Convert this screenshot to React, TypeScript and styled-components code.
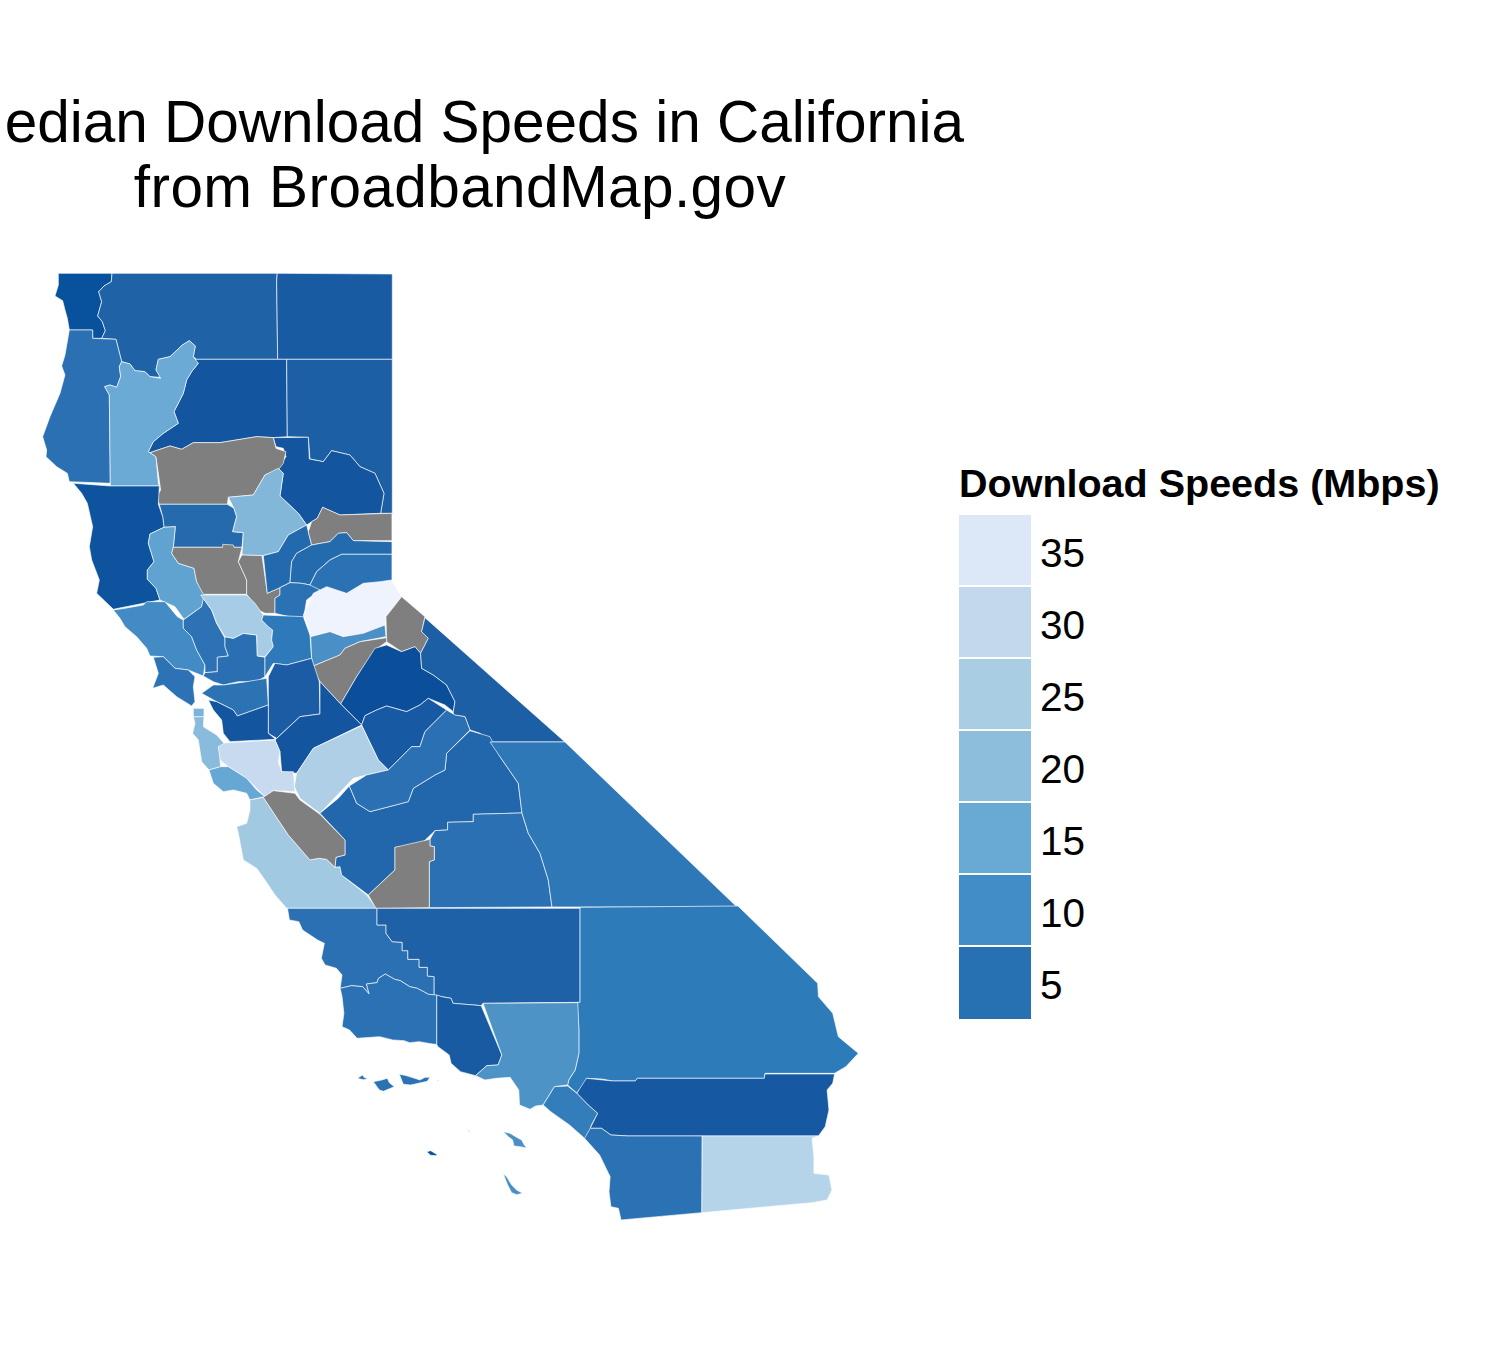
import styled, { createGlobalStyle } from 'styled-components';

const GlobalStyle = createGlobalStyle`
  html, body {
    margin: 0;
    padding: 0;
    background: #fff;
  }
  body {
    width: 1500px;
    height: 1350px;
    overflow: hidden;
    font-family: "Liberation Sans", Arial, sans-serif;
    color: #000;
  }
`;

interface County {
  name: string;
  fill: string;
  points: string;
}

interface Sheet {
  transform: string;
  counties: County[];
}

const GRAY = '#7f7f7f';

// traced in crops of the map, each sheet has its own origin and scale
const north: County[] = [
  { name: 'del-norte', fill: '#08519c', points: '85,40 246,40 244,65 222,78 206,95 215,125 203,168 217,185 226,212 215,235 188,235 188,210 118,210 112,175 105,150 98,122 75,108 85,75' },
  { name: 'siskiyou', fill: '#1f62a6', points: '246,40 742,40 740,60 743,298 500,298 490,290 496,258 478,242 456,256 420,290 385,298 378,330 392,352 360,350 345,335 315,332 300,312 275,305 258,238 215,235 226,212 217,185 203,168 215,125 206,95 222,78 244,65' },
  { name: 'modoc', fill: '#195ba3', points: '742,40 1087,42 1087,298 743,298 740,60' },
  { name: 'humboldt', fill: '#2a70b2', points: '118,210 188,210 188,235 258,238 275,305 268,320 272,350 260,382 240,375 224,380 238,405 241,670 118,665 112,640 80,620 48,590 50,570 38,530 60,470 90,400 105,345 95,318 105,285' },
  { name: 'shasta', fill: '#14559f', points: '490,298 743,298 770,298 772,530 730,533 680,530 570,548 490,548 455,568 420,558 360,578 355,575 370,545 400,520 445,490 432,455 460,400 470,360 485,335 505,310' },
  { name: 'trinity', fill: '#6aaad5', points: '275,305 300,312 315,332 345,335 360,350 392,355 378,330 385,298 420,290 456,256 478,242 496,258 490,290 505,310 485,335 470,360 460,400 432,455 445,490 400,520 370,545 355,575 378,590 385,670 388,678 241,678 238,405 224,380 240,375 260,382 272,350 268,320' },
  { name: 'lassen', fill: '#1d5fa5', points: '770,298 1087,298 1087,760 1052,760 1062,700 1035,640 990,620 960,585 905,572 880,605 840,597 835,532 772,530' },
  { name: 'plumas', fill: '#14559f', points: '730,533 835,532 838,597 880,605 905,572 960,585 990,620 1035,640 1062,700 1052,760 930,765 878,742 862,775 830,795 805,760 750,708 760,640 745,625 768,590 760,565 738,560' },
  { name: 'tehama', fill: GRAY, points: '360,578 420,558 455,568 490,548 570,548 680,530 730,533 738,565 768,575 760,610 745,630 705,645 670,705 595,712 592,733 388,733 380,710 392,690 378,590' },
  { name: 'glenn', fill: '#246aad', points: '388,733 592,733 612,745 620,770 608,815 640,818 636,862 430,862 436,800 402,802 398,770' },
  { name: 'butte', fill: '#82b7da', points: '595,712 670,705 705,645 745,625 760,640 750,708 805,760 830,795 775,825 745,875 700,887 636,885 640,818 608,815 620,770 612,745' },
  { name: 'mendocino', fill: '#0e539e', points: '130,670 241,678 388,678 385,733 398,770 402,802 360,822 355,850 372,905 352,930 352,958 378,985 390,1020 250,1048 200,1000 208,960 185,900 178,860 188,800 172,730 155,700' },
  { name: 'lake', fill: '#60a3d0', points: '402,802 436,800 430,862 425,880 445,910 492,925 500,965 525,1005 515,1040 462,1078 435,1040 390,1020 378,985 352,958 352,930 372,905 355,850 360,822' },
  { name: 'colusa', fill: GRAY, points: '430,862 578,862 578,853 610,855 612,862 636,862 625,905 650,960 650,1003 520,1003 500,965 492,925 445,910 425,880' },
  { name: 'sutter', fill: GRAY, points: '625,905 636,885 696,887 712,1000 750,983 750,1005 735,1015 735,1060 705,1060 685,1050 650,1003 650,960' },
  { name: 'yuba', fill: '#2369ad', points: '700,887 745,875 775,825 830,795 845,855 800,880 785,905 780,968 750,983 712,1000' },
  { name: 'sierra', fill: GRAY, points: '878,742 930,765 1086,760 1086,842 970,842 950,818 925,820 900,845 845,855 835,815 845,785 862,775' },
  { name: 'nevada', fill: '#246bae', points: '845,855 900,845 925,820 950,818 970,842 1086,845 1086,883 935,883 900,900 860,935 840,975 815,970 780,968 785,905 800,880' },
  { name: 'placer', fill: '#2b72b4', points: '935,883 1086,883 1086,975 1000,1000 940,1020 860,1000 840,975 860,935 900,900' },
  { name: 'el-dorado', fill: '#2b72b4', points: '750,983 780,968 815,970 840,975 870,990 830,1020 820,1080 735,1060 735,1015 750,1005' },
];

const central: County[] = [
  { name: 'sonoma', fill: '#438bc5', points: '40,120 75,115 130,105 140,95 195,95 232,140 250,150 250,175 275,200 290,240 315,285 310,318 265,300 225,295 190,260 150,258 140,235 110,200 75,170 60,145' },
  { name: 'marin', fill: '#2d72b4', points: '160,262 190,260 225,295 265,300 285,320 280,350 285,395 275,408 230,380 190,345 158,355 175,310' },
  { name: 'napa', fill: '#2c72b4', points: '250,150 305,110 310,85 335,120 350,160 375,205 375,230 385,258 352,262 352,305 315,308 315,285 290,240 275,200 250,175' },
  { name: 'solano', fill: '#2a6fb2', points: '375,200 400,205 430,190 470,195 472,258 495,262 495,320 470,335 440,335 415,335 370,345 340,335 310,318 315,308 352,305 352,262 385,258 375,230' },
  { name: 'yolo', fill: '#a6cde5', points: '302,75 440,75 465,100 490,135 485,150 505,170 518,180 515,210 520,230 495,260 472,258 470,195 430,190 400,205 375,200 350,160 335,120 320,100' },
  { name: 'sacramento', fill: '#2e79b9', points: '490,135 610,140 630,195 635,265 560,285 520,280 495,320 495,262 520,230 515,210 518,180 505,170 485,150' },
  { name: 'alpine', fill: '#eff3fe', points: '610,135 640,70 680,50 740,70 790,40 840,35 875,30 905,80 860,140 855,165 790,190 730,200 690,185 632,200 625,170' },
  { name: 'amador', fill: '#4a90c6', points: '632,200 690,185 730,200 790,190 855,165 858,200 780,215 735,235 720,255 640,288 635,265' },
  { name: 'mono', fill: GRAY, points: '905,80 975,140 965,185 985,205 962,250 945,230 905,245 860,215 858,140' },
  { name: 'calaveras', fill: GRAY, points: '640,288 720,255 735,235 780,215 860,203 860,215 825,240 770,320 722,402 660,335 645,310' },
  { name: 'tuolumne', fill: '#0b4f9b', points: '825,235 860,225 905,245 945,230 962,250 965,295 1000,315 1040,345 1065,395 1060,425 1035,405 985,385 960,405 920,425 860,408 830,420 795,437 785,465 722,402 770,320' },
  { name: 'inyo', fill: '#1d5fa5', points: '975,143 1395,516 1170,516 1140,490 1110,480 1095,440 1060,435 1060,425 1065,395 1040,345 1000,315 965,295 962,250 985,205 965,185' },
  { name: 'san-joaquin', fill: '#1b5ca4', points: '505,320 525,280 560,285 635,265 658,335 660,432 600,440 530,505 505,490' },
  { name: 'stanislaus', fill: '#14559f', points: '660,335 722,402 785,465 640,535 590,610 545,605 540,545 525,510 600,440 660,432' },
  { name: 'mariposa', fill: '#175aa3', points: '795,437 830,420 860,408 920,425 960,405 985,385 1040,420 975,485 960,530 935,530 865,600 835,570 785,465' },
  { name: 'merced', fill: '#aecfe6', points: '785,467 835,570 865,600 800,615 760,625 660,730 600,685 583,650 590,610 640,535' },
  { name: 'santa-clara', fill: '#c7daf0', points: '355,520 525,510 540,545 535,575 545,605 580,605 585,665 520,662 495,680 440,625 385,590 360,570 355,545' },
  { name: 'contra-costa', fill: '#2c73b4', points: '305,370 340,345 370,345 440,335 500,325 505,405 412,438 400,420 350,395' },
  { name: 'alameda', fill: '#14559f', points: '325,390 350,395 400,420 412,438 505,405 505,490 527,508 390,515 370,490 365,450 340,420' },
  { name: 'san-mateo', fill: '#88bbdc', points: '280,440 312,440 310,470 350,495 372,520 355,530 360,570 362,590 327,600 305,575 295,510 278,490 285,460' },
  { name: 'san-francisco', fill: '#7cb4d9', points: '280,415 312,415 312,440 280,440' },
  { name: 'santa-cruz', fill: '#66a7d3', points: '327,600 362,590 385,590 440,625 470,660 495,680 450,690 440,670 400,660 370,665 340,640' },
  { name: 'monterey', fill: '#a2c9e2', points: '450,690 490,682 525,735 565,795 630,870 655,865 680,868 705,892 720,890 725,915 800,975 830,1015 560,1015 525,975 495,930 470,895 430,870 415,790 410,770 440,760 450,720' },
  { name: 'fresno', fill: '#2266ab', points: '660,730 715,685 748,648 770,700 810,725 925,695 940,655 1005,615 1035,600 1040,550 1110,482 1170,500 1200,560 1255,640 1266,729 1120,733 1120,755 1043,757 1043,780 1005,782 960,825 885,832 885,900 805,975 725,915 720,890 705,892 708,862 735,855 735,810' },
  { name: 'san-benito', fill: GRAY, points: '490,682 520,662 585,670 600,690 660,733 735,810 735,855 708,862 705,892 680,868 655,865 630,870 565,795 525,735' },
  { name: 'madera', fill: '#2a70b2', points: '748,648 800,615 865,600 935,530 960,530 975,485 1040,420 1065,435 1095,440 1110,480 1040,550 1035,600 1005,615 940,655 925,695 810,725 770,700' },
  { name: 'tulare', fill: '#2a70b2', points: '1005,782 1043,780 1043,757 1120,755 1120,733 1266,729 1285,790 1320,850 1345,930 1356,1011 988,1013 988,875 1003,870 1003,830 990,828 990,808' },
  { name: 'kings', fill: GRAY, points: '885,832 990,808 990,828 1003,830 1003,870 988,875 988,1013 828,1015 805,975 885,900' },
  { name: 'mono-south', fill: '#2e78b8', points: '1170,516 1395,516 1911,1011 1356,1011 1345,930 1320,850 1285,790 1266,729 1255,640 1200,560' },
];

const south: County[] = [
  { name: 'san-luis-obispo', fill: '#2a70b2', points: '20,55 258,55 258,105 282,105 282,130 298,155 325,157 325,182 340,182 340,208 370,208 370,232 392,232 392,258 410,260 410,315 395,313 365,295 345,290 320,272 305,268 280,252 262,265 258,278 230,282 237,312 220,290 190,287 160,295 165,255 150,235 120,225 110,205 118,160 100,150 60,120 50,95 25,90' },
  { name: 'kern', fill: '#1e61a7', points: '258,55 798,55 798,337 540,340 535,347 515,345 460,340 455,325 430,320 410,315 410,260 392,258 392,232 370,232 370,208 340,208 340,182 325,182 325,157 298,155 282,130 282,105 258,105' },
  { name: 'san-bernardino', fill: '#2e7bba', points: '798,52 1218,48 1430,280 1432,320 1470,370 1485,440 1538,490 1505,530 1475,550 1290,550 1288,565 950,565 945,573 885,573 855,567 815,565 810,590 795,600 790,610 765,585 768,570 785,540 795,490 795,420 790,337 798,337' },
  { name: 'santa-barbara', fill: '#2b72b4', points: '160,295 190,287 220,290 237,312 230,282 258,278 262,265 280,252 305,268 320,272 345,290 365,295 395,313 417,315 417,463 405,462 370,455 345,458 330,452 300,450 265,440 205,445 185,420 165,410 170,370 165,320' },
  { name: 'ventura', fill: '#185ba3', points: '417,315 430,320 455,325 460,340 515,345 535,347 590,495 580,525 550,527 520,557 480,545 455,520 450,495 420,470 417,463' },
  { name: 'los-angeles', fill: '#4e93c6', points: '540,340 792,338 795,420 795,490 785,540 768,570 765,585 730,590 700,645 680,648 665,658 637,645 635,600 612,562 575,565 545,570 520,557 550,527 580,525 590,495' },
  { name: 'orange', fill: '#337dba', points: '730,590 765,588 792,612 820,645 845,670 827,708 825,730 810,745 770,705 720,665 700,645' },
  { name: 'riverside', fill: '#1659a2', points: '790,610 795,600 815,565 885,573 945,573 950,565 1288,565 1290,552 1475,552 1470,580 1455,600 1460,660 1450,710 1432,738 925,738 880,735 855,715 825,715 845,670 820,645' },
  { name: 'san-diego', fill: '#2b72b4', points: '825,715 855,715 880,735 925,738 1123,738 1122,968 907,990 900,955 880,950 875,905 878,860 850,795 810,745' },
  { name: 'imperial', fill: '#b5d3e9', points: '1123,738 1432,738 1415,745 1420,800 1420,850 1460,855 1468,900 1455,930 1415,938 1122,968' },
];

const islands: County[] = [
  { name: 'san-miguel', fill: '#2b72b4', points: '52,145 68,135 72,142 84,146 70,149' },
  { name: 'santa-rosa', fill: '#2b72b4', points: '100,155 125,150 142,145 148,158 163,170 130,184 118,180' },
  { name: 'santa-cruz-island', fill: '#2b72b4', points: '178,133 195,136 215,142 240,150 255,142 270,142 262,154 235,160 212,165 190,163' },
  { name: 'anacapa', fill: '#4a8fc6', points: '291,151 297,151 297,153 291,153' },
  { name: 'santa-barbara-island', fill: '#4a8fc6', points: '385,303 389,300 388,307' },
  { name: 'san-nicolas', fill: '#08519c', points: '260,365 272,362 290,373 290,377 272,376' },
  { name: 'catalina', fill: '#4a8fc6', points: '490,305 510,310 530,322 545,330 553,345 561,354 540,350 522,348 518,330 505,320' },
  { name: 'san-clemente', fill: '#4a8fc6', points: '490,432 500,440 515,465 530,480 548,490 530,494 515,488 503,465' },
];

const sheets: Sheet[] = [
  { transform: 'translate(30 260) scale(0.3333)', counties: north },
  { transform: 'translate(100 570) scale(0.3333)', counties: central },
  { transform: 'translate(280 890) scale(0.376 0.3333)', counties: south },
  { transform: 'translate(340 1030) scale(0.3333)', counties: islands },
];

const legendItems = [
  { label: '35', color: '#dce7f7' },
  { label: '30', color: '#c3d8ed' },
  { label: '25', color: '#a9cee4' },
  { label: '20', color: '#8dbedc' },
  { label: '15', color: '#69aad4' },
  { label: '10', color: '#428dc7' },
  { label: '5', color: '#2770b1' },
];

const Figure = styled.div`
  display: flex;
  width: 1500px;
  height: 1350px;
`;

const PlotColumn = styled.div`
  display: flex;
  flex-direction: column;
  align-items: center;
  flex: 0 0 920px;
  min-width: 0;
  padding-top: 89px;
`;

const TitleLine = styled.div<{ $tracking?: number }>`
  font-size: 58.5px;
  line-height: 65px;
  white-space: nowrap;
  letter-spacing: ${p => p.$tracking ?? 0}px;
`;

const MapSvg = styled.svg`
  display: block;
  margin-top: 41px;
  width: 920px;
  height: 1000px;
  flex: none;
`;

const CountyShape = styled.polygon`
  stroke: #fff;
  stroke-width: 0.9;
  stroke-opacity: 0.7;
  stroke-linejoin: round;
  vector-effect: non-scaling-stroke;
`;

const Legend = styled.div`
  margin-left: 39px;
  padding-top: 461px;
`;

const LegendTitle = styled.div`
  font-size: 39.5px;
  line-height: 44px;
  font-weight: 700;
  white-space: nowrap;
  margin-bottom: 10px;
`;

const LegendRow = styled.div`
  display: flex;
  align-items: center;
  height: 72px;
  gap: 9px;
`;

const Swatch = styled.div<{ $color: string }>`
  width: 72px;
  height: 72px;
  box-sizing: border-box;
  border-bottom: 2px solid #fff;
  background: ${p => p.$color};

  ${LegendRow}:last-child & {
    border-bottom: 0;
  }
`;

const LegendLabel = styled.div`
  font-size: 40.5px;
  line-height: 44px;
  padding-top: 4px;
`;

export default function App() {
  return (
    <>
      <GlobalStyle />
      <Figure>
        <PlotColumn>
          <TitleLine>Median Download Speeds in California</TitleLine>
          <TitleLine $tracking={0.4}>from BroadbandMap.gov</TitleLine>
          <MapSvg viewBox="0 260 920 1000">
            {sheets.map((sheet, i) => (
              <g key={i} transform={sheet.transform}>
                {sheet.counties.map(county => (
                  <CountyShape key={county.name} fill={county.fill} points={county.points} />
                ))}
              </g>
            ))}
          </MapSvg>
        </PlotColumn>
        <Legend>
          <LegendTitle>Download Speeds (Mbps)</LegendTitle>
          {legendItems.map(item => (
            <LegendRow key={item.label}>
              <Swatch $color={item.color} />
              <LegendLabel>{item.label}</LegendLabel>
            </LegendRow>
          ))}
        </Legend>
      </Figure>
    </>
  );
}
